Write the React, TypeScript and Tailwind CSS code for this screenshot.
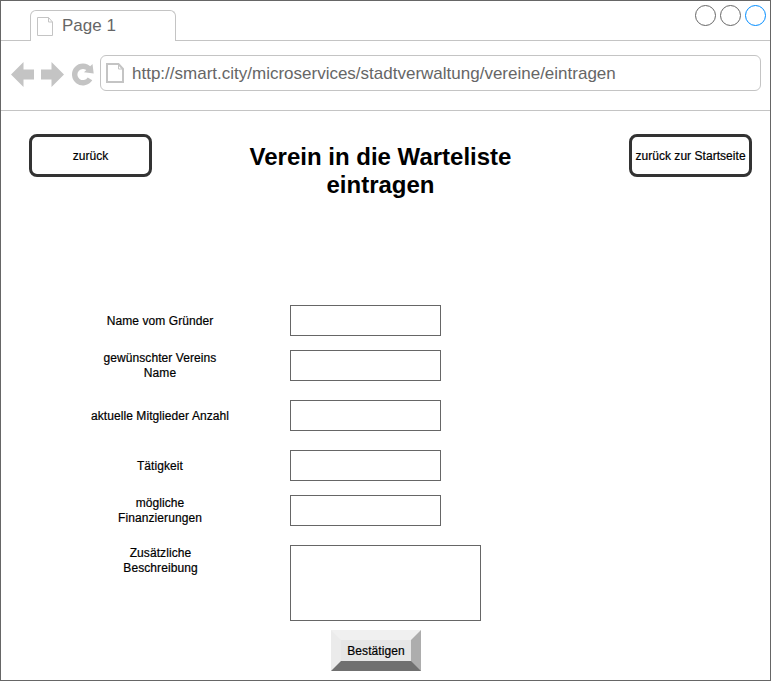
import React from 'react';

type Field = { label: string; row: string; labelPad: string };

const fields: Field[] = [
  { label: 'Name vom Gründer', row: 'h-[45px]', labelPad: 'pt-[9px]' },
  { label: 'gewünschter Vereins\nName', row: 'h-[50px]', labelPad: 'pt-px' },
  { label: 'aktuelle Mitglieder Anzahl', row: 'h-[50px]', labelPad: 'pt-[9px]' },
  { label: 'Tätigkeit', row: 'h-[45px]', labelPad: 'pt-[9px]' },
  { label: 'mögliche\nFinanzierungen', row: 'h-[50px]', labelPad: 'pt-px' },
];

function NavButton({ children }: { children: string }) {
  return (
    <button className="flex h-[43px] w-[123px] shrink-0 items-center justify-center whitespace-nowrap rounded-lg border-3 border-[#333333] pt-px text-[12px] leading-[15px] tracking-[0.04px] [-webkit-text-stroke:0.2px_black]">
      {children}
    </button>
  );
}

export default function App() {
  return (
    <div className="flex h-[681px] w-[771px] flex-col overflow-hidden border border-[#666666] bg-white font-['Liberation_Sans',Arial,sans-serif] text-black">
      <div className="flex h-10 shrink-0">
        <div className="w-[29px] border-b border-[#c4c4c4]" />
        <div className="mt-[9px] flex w-[146px] rounded-t-[6px] border border-b-0 border-[#c4c4c4] pl-[6px]">
          <svg className="mt-[6px] h-[19px] w-4" viewBox="0 0 16 19" fill="none" stroke="#c4c4c4">
            <path d="M0.5 0.5H11.5L15.5 5V18.5H0.5Z" />
            <path d="M11.5 0.5V5H15.5" />
          </svg>
          <span className="ml-[9px] mt-[5px] text-[17px] leading-[20px] text-[#666666]">Page 1</span>
        </div>
        <div className="flex flex-1 justify-end border-b border-[#c4c4c4] pr-[4px] pt-[4px]">
          <svg className="h-[22px] w-[72px]" viewBox="0 0 72 22" fill="none" stroke="#666666">
            <circle cx="11.5" cy="10.5" r="10" />
            <circle cx="36.5" cy="10.5" r="10" />
            <circle cx="61.5" cy="10.5" r="10" stroke="#008cff" />
          </svg>
        </div>
      </div>

      <div className="flex h-[70px] shrink-0 border-b border-[#c4c4c4]">
        <svg className="h-[69px] w-[99px] shrink-0" viewBox="1 41 99 69" fill="#c4c4c4">
          <path d="M11 74.5L23.5 62V69.5H34V79.5H23.5V87Z" />
          <path d="M64 74.5L51.5 62V69.5H41V79.5H51.5V87Z" />
          <path d="M90 78.9A8.3 8.3 0 1 1 89.2 69" fill="none" stroke="#c4c4c4" strokeWidth="5.4" />
          <path d="M92.5 64L93.7 73.6L84 72.2Z" />
        </svg>
        <div className="mt-[14px] flex h-9 w-[661px] rounded-[6px] border border-[#c4c4c4] pl-[5px]">
          <svg className="mt-[7px] h-5 w-[18px]" viewBox="0 0 18 20" fill="none" stroke="#c4c4c4" strokeWidth="2">
            <path d="M1 1H12.5L17 6V19H1Z" />
            <path d="M12.5 1V6H17" strokeWidth="1" />
          </svg>
          <span className="ml-[8px] mt-[8px] whitespace-nowrap text-[17px] leading-[20px] text-[#666666]">
            http://smart.city/microservices/stadtverwaltung/vereine/eintragen
          </span>
        </div>
      </div>

      <main className="flex flex-1 flex-col">
        <header className="flex h-[194px] shrink-0 items-start justify-between pl-[28px] pr-[18px] pt-[23px]">
          <NavButton>zurück</NavButton>
          <h1 className="mr-5 mt-[9px] w-[300px] text-center text-[24px] font-bold leading-[28px]">
            Verein in die Warteliste eintragen
          </h1>
          <NavButton>zurück zur Startseite</NavButton>
        </header>

        <form className="flex flex-col pl-[79px] text-[12px] leading-[15px] tracking-[0.08px] [-webkit-text-stroke:0.2px_black]">
          {fields.map((f) => (
            <div key={f.label} className={`flex items-start ${f.row}`}>
              <label className={`w-[160px] whitespace-pre-line text-center ${f.labelPad}`}>{f.label}</label>
              <input className="ml-[50px] h-[31px] w-[151px] border border-[#666666]" />
            </div>
          ))}
          <div className="flex h-[85px] items-start">
            <label className="w-[160px] whitespace-pre-line pl-px pt-px text-center">{'Zusätzliche\nBeschreibung'}</label>
            <textarea className="ml-[50px] h-[76px] w-[191px] resize-none border border-[#666666]" />
          </div>
          <button
            type="button"
            className="ml-[251px] flex h-[41px] w-[90px] items-center justify-center whitespace-nowrap border-10 border-t-[#f0f0f0] border-r-[#adadad] border-b-[#707070] border-l-[#ebebeb] bg-[#e6e6e6] pt-px"
          >
            Bestätigen
          </button>
        </form>
      </main>
    </div>
  );
}
